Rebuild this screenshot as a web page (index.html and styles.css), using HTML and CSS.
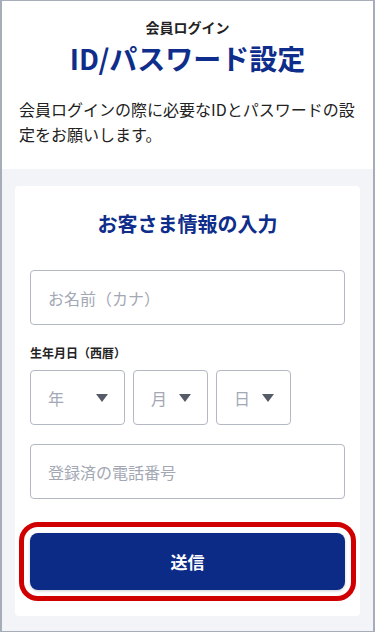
FILE: index.html
```html
<!DOCTYPE html>
<html lang="ja">
<head>
    <meta charset="UTF-8">
    <meta name="viewport" content="width=device-width, initial-scale=1.0">
    <title>ID/パスワード設定</title>
    <link rel="stylesheet" href="styles.css">
</head>
<body>
    <div class="page">
        <!-- Header -->
        <header class="head">
            <p class="eyebrow">会員ログイン</p>
            <h1 class="title">ID/パスワード設定</h1>
            <p class="desc">会員ログインの際に必要なIDとパスワードの設定をお願いします。</p>
        </header>

        <!-- Form -->
        <main class="body">
            <form class="card">
                <h2 class="card-title">お客さま情報の入力</h2>

                <div class="field">お名前（カナ）</div>

                <p class="label">生年月日（西暦）</p>
                <div class="dates">
                    <div class="select year">
                        <span>年</span>
                        <svg width="12" height="8" viewBox="0 0 12 8"><polygon points="0,0 12,0 6,8" class="caret"/></svg>
                    </div>
                    <div class="select">
                        <span>月</span>
                        <svg width="12" height="8" viewBox="0 0 12 8"><polygon points="0,0 12,0 6,8" class="caret"/></svg>
                    </div>
                    <div class="select">
                        <span>日</span>
                        <svg width="12" height="8" viewBox="0 0 12 8"><polygon points="0,0 12,0 6,8" class="caret"/></svg>
                    </div>
                </div>

                <div class="field phone">登録済の電話番号</div>

                <button type="button" class="submit">送信</button>
            </form>
        </main>
    </div>
</body>
</html>
```

FILE: styles.css
```css
body {
    margin: 0;
    font-family: "Noto Sans CJK JP", "Noto Sans", sans-serif;
    color: #222;
    background-color: #f2f4f7;
}
.page {
    box-sizing: border-box;
    min-height: 632px;
    border: 2px solid #a6acb8;
    border-top-width: 1px;
    background-color: #f2f4f7;
}
.head {
    background-color: white;
    padding: 16px 17px 22px;
}
.eyebrow {
    margin: 0;
    font-size: 14px;
    line-height: 20px;
    font-weight: bold;
    text-align: center;
    color: #222;
}
.title {
    margin: 3px 0 0;
    font-size: 28px;
    line-height: 36px;
    font-weight: bold;
    text-align: center;
    color: #0f2d8a;
}
.desc {
    margin: 21px 0 0;
    font-size: 16px;
    line-height: 25px;
}
.body {
    padding: 17px 13px 15px;
}
.card {
    background-color: white;
    border-radius: 4px;
    padding: 24px 15px 26px;
}
.card-title {
    margin: 0;
    font-size: 20px;
    line-height: 28px;
    font-weight: bold;
    text-align: center;
    color: #0f2d8a;
}
.field {
    box-sizing: border-box;
    height: 55px;
    margin-top: 32px;
    padding: 0 17px;
    display: flex;
    align-items: center;
    border: 1px solid #b3b8c3;
    border-radius: 4px;
    font-size: 16px;
    color: #a3a8b4;
}
.phone {
    margin-top: 19px;
}
.label {
    margin: 19px 0 0;
    font-size: 12px;
    line-height: 18px;
    font-weight: bold;
}
.dates {
    display: flex;
    gap: 8px;
    margin-top: 8px;
}
.select {
    box-sizing: border-box;
    width: 75px;
    height: 55px;
    padding: 0 16px 0 17px;
    display: flex;
    align-items: center;
    justify-content: space-between;
    border: 1px solid #b3b8c3;
    border-radius: 4px;
    font-size: 16px;
    color: #a3a8b4;
}
.year {
    width: 95px;
}
.caret {
    fill: #555b67;
}
.submit {
    display: block;
    width: 100%;
    height: 57px;
    margin-top: 34px;
    border: none;
    border-radius: 8px;
    background-color: #0c2b87;
    color: white;
    font-family: inherit;
    font-size: 17px;
    font-weight: bold;
    outline: 5px solid #d10000;
    outline-offset: 6px;
    box-shadow: 0 1px 3px rgba(0, 0, 0, 0.2);
}
```
